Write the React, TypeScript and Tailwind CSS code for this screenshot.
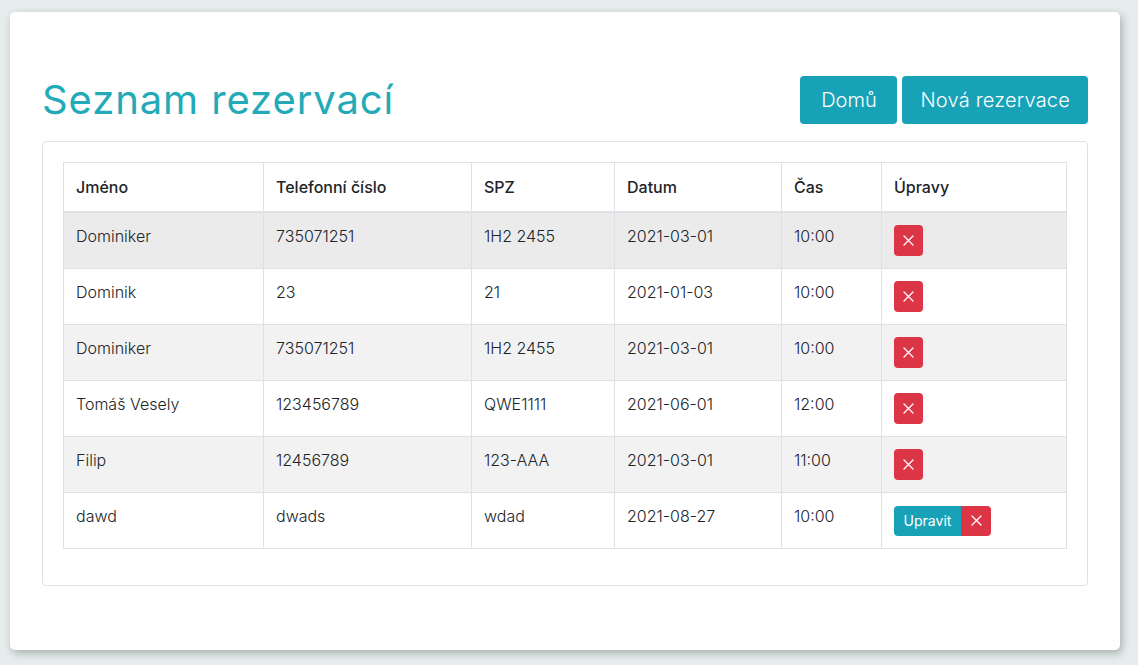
import React from 'react'

type Row = { name: string; phone: string; spz: string; date: string; time: string; edit?: boolean }

const rows: Row[] = [
  { name: 'Dominiker', phone: '735071251', spz: '1H2 2455', date: '2021-03-01', time: '10:00' },
  { name: 'Dominik', phone: '23', spz: '21', date: '2021-01-03', time: '10:00' },
  { name: 'Dominiker', phone: '735071251', spz: '1H2 2455', date: '2021-03-01', time: '10:00' },
  { name: 'Tomáš Vesely', phone: '123456789', spz: 'QWE1111', date: '2021-06-01', time: '12:00' },
  { name: 'Filip', phone: '12456789', spz: '123-AAA', date: '2021-03-01', time: '11:00' },
  { name: 'dawd', phone: 'dwads', spz: 'wdad', date: '2021-08-27', time: '10:00', edit: true },
]

const rowBg = ['bg-[#ebebeb]', 'bg-white', 'bg-[#f2f2f2]', 'bg-white', 'bg-[#f2f2f2]', 'bg-white']

function XIcon() {
  return (
    <svg width="11" height="11" viewBox="0 0 11 11" fill="none">
      <path d="M1 1L10 10M10 1L1 10" stroke="white" strokeWidth="1.3" strokeLinecap="round" />
    </svg>
  )
}

export default function App() {
  const td = 'border border-[#dee2e6] px-3 align-top pt-[11px] pb-3'
  return (
    <div
      className="min-h-[665px] bg-[#e5eded] pt-3 pl-[10px] pr-[18px] text-[#212529]"
      style={{ fontFamily: 'Inter, "Noto Sans", sans-serif' }}
    >
      <div className="h-[638px] rounded-[5px] bg-white px-8 pt-16 shadow-[2px_3px_8px_rgba(0,0,0,0.28)]">
        <div className="flex items-center justify-between">
          <h1 className="text-[40px] leading-[48px] font-normal text-[#22aab9] tracking-[0.9px]">Seznam rezervací</h1>
          <div className="flex gap-[5px]">
            <button className="h-12 w-[97px] rounded-[4px] bg-[#17a2b8] text-[20px] font-light text-white">Domů</button>
            <button className="h-12 rounded-[4px] bg-[#17a2b8] px-[18px] text-[20px] font-light text-white tracking-[0.2px]">Nová rezervace</button>
          </div>
        </div>

        <div className="mt-[17px] rounded-[4px] border border-[#dee2e6] px-5 pt-5 pb-9">
          <table className="w-full border-collapse text-[16px] leading-6">
            <colgroup>
              <col className="w-[200px]" />
              <col className="w-[208px]" />
              <col className="w-[143px]" />
              <col className="w-[167px]" />
              <col className="w-[100px]" />
              <col />
            </colgroup>
            <thead>
              <tr>
                {['Jméno', 'Telefonní číslo', 'SPZ', 'Datum', 'Čas', 'Úpravy'].map((h) => (
                  <th
                    key={h}
                    className="h-[49px] border border-b-2 border-[#dee2e6] px-3 py-3 text-left align-middle font-medium"
                  >
                    {h}
                  </th>
                ))}
              </tr>
            </thead>
            <tbody className="font-light">
              {rows.map((r, i) => (
                <tr key={i} className={rowBg[i]}>
                  <td className={td}>{r.name}</td>
                  <td className={td}>{r.phone}</td>
                  <td className={td}>{r.spz}</td>
                  <td className={td}>{r.date}</td>
                  <td className={td}>{r.time}</td>
                  <td className="border border-[#dee2e6] px-3 py-3 align-top">
                    {r.edit ? (
                      <div className="flex h-[31px] items-center">
                        <button className="h-[30px] w-[67px] rounded-l-[4px] bg-[#17a2b8] text-[14px] font-normal text-white">Upravit</button>
                        <button className="flex h-[30px] w-[30px] items-center justify-center rounded-r-[4px] bg-[#dc3545]">
                          <XIcon />
                        </button>
                      </div>
                    ) : (
                      <button className="flex h-[31px] w-[29px] items-center justify-center rounded-[4px] bg-[#dc3545]">
                        <XIcon />
                      </button>
                    )}
                  </td>
                </tr>
              ))}
            </tbody>
          </table>
        </div>
      </div>
    </div>
  )
}
